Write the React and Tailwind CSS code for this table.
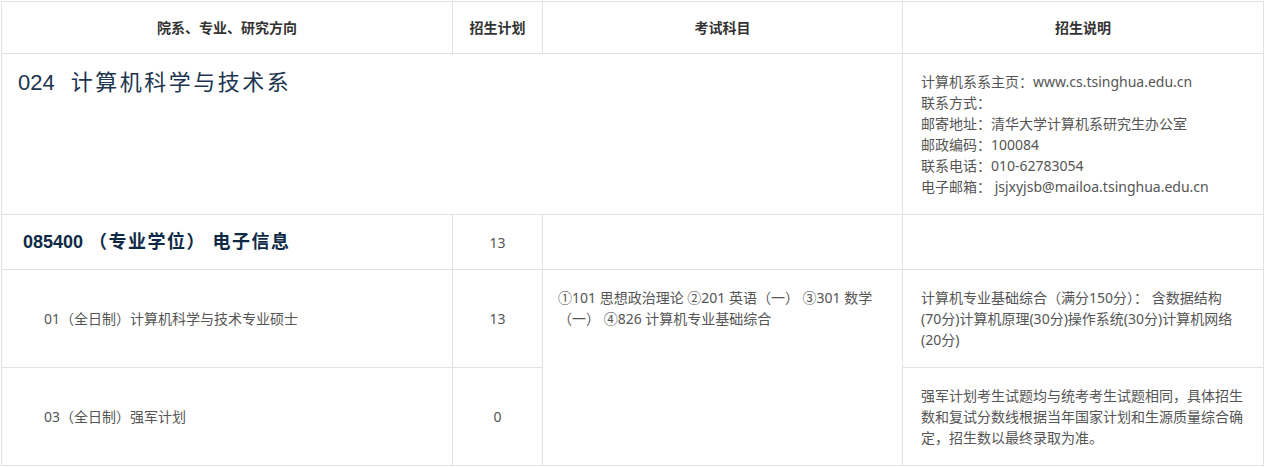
import React from 'react';

const font = { fontFamily: '"Noto Sans", "Noto Sans CJK SC", sans-serif' };
const titleFont = { fontFamily: '"Liberation Sans", "Noto Sans CJK SC", sans-serif' };

const contactLines = [
  '计算机系系主页：www.cs.tsinghua.edu.cn',
  '联系方式：',
  '邮寄地址：清华大学计算机系研究生办公室',
  '邮政编码：100084',
  '联系电话：010-62783054',
  '电子邮箱： jsjxyjsb@mailoa.tsinghua.edu.cn',
];

function HeaderCell({ children }) {
  return (
    <th className="border border-[#dfe3e8] py-[15px] text-center text-[14px] leading-[21px] font-bold text-[#333]">
      {children}
    </th>
  );
}

function Score({ children }) {
  return <span className="whitespace-nowrap">{children}</span>;
}

export default function App() {
  const cell = 'border border-[#dfe3e8] text-[14px] leading-[21px] text-[#555]';

  return (
    <div className="bg-white pt-px pl-px min-h-[467px]" style={font}>
      <table className="w-[1262px] table-fixed border-collapse">
        <colgroup>
          <col className="w-[451px]" />
          <col className="w-[90px]" />
          <col className="w-[360px]" />
          <col className="w-[361px]" />
        </colgroup>
        <thead>
          <tr>
            <HeaderCell>院系、专业、研究方向</HeaderCell>
            <HeaderCell>招生计划</HeaderCell>
            <HeaderCell>考试科目</HeaderCell>
            <HeaderCell>招生说明</HeaderCell>
          </tr>
        </thead>
        <tbody>
          <tr>
            <td colSpan={3} className={`${cell} align-top pt-[14px] pl-[16px]`}>
              <span className="text-[22px] leading-[30px] text-[#1c3550]" style={titleFont}>
                024
                <span className="ml-[16px] tracking-[2.5px]">计算机科学与技术系</span>
              </span>
            </td>
            <td className={`${cell} align-top py-[17px] pl-[18px] pr-[12px]`}>
              {contactLines.map((line) => (
                <div key={line}>{line}</div>
              ))}
            </td>
          </tr>
          <tr>
            <td className={`${cell} h-[55px] py-0 pl-[21px] align-middle`}>
              <span className="text-[18px] leading-[21px] font-bold text-[#0e2a47]" style={titleFont}>
                085400
                <span className="ml-[6px] tracking-[1.5px]">（专业学位） 电子信息</span>
              </span>
            </td>
            <td className={`${cell} text-center align-middle`}>13</td>
            <td className={cell}></td>
            <td className={cell}></td>
          </tr>
          <tr>
            <td className={`${cell} pl-[42px] align-middle`}>01（全日制）计算机科学与技术专业硕士</td>
            <td className={`${cell} text-center align-middle`}>13</td>
            <td rowSpan={2} className={`${cell} align-top py-[17px] pl-[15px] pr-[14px]`}>
              ①101 思想政治理论 ②201 英语（一） ③301 数学（一） ④826 计算机专业基础综合
            </td>
            <td className={`${cell} align-top py-[17px] pl-[18px] pr-[12px]`}>
              计算机专业基础综合（满分150分）： 含数据结构<Score>(70分)</Score>计算机原理<Score>(30分)</Score>操作系统<Score>(30分)</Score>计算机网络<Score>(20分)</Score>
            </td>
          </tr>
          <tr>
            <td className={`${cell} pl-[42px] align-middle`}>03（全日制）强军计划</td>
            <td className={`${cell} text-center align-middle`}>0</td>
            <td className={`${cell} align-top py-[17px] pl-[18px] pr-[12px]`}>
              强军计划考生试题均与统考考生试题相同，具体招生数和复试分数线根据当年国家计划和生源质量综合确定，招生数以最终录取为准。
            </td>
          </tr>
        </tbody>
      </table>
    </div>
  );
}
